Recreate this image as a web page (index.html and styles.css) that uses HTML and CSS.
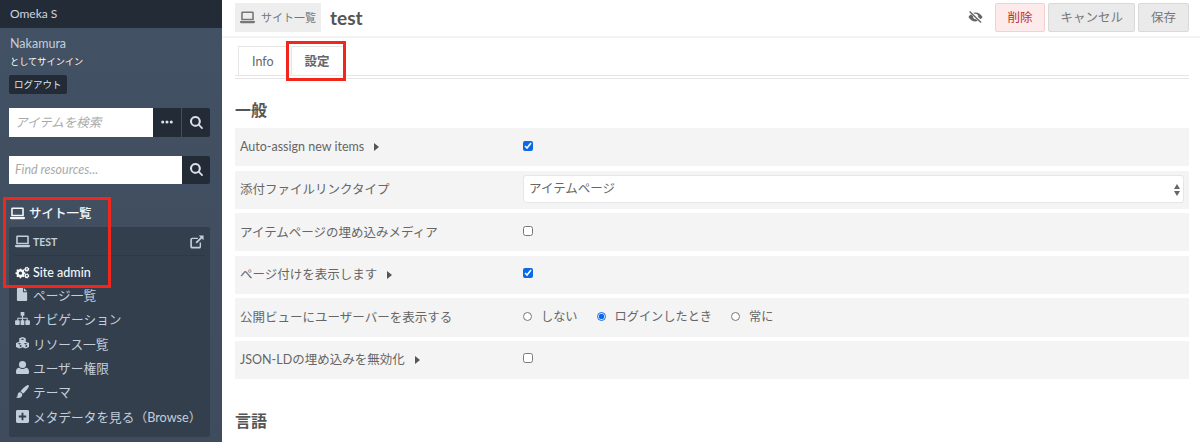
FILE: index.html
```html
<!DOCTYPE html>
<html lang="ja">
<head>
    <meta charset="UTF-8">
    <title>test · 設定 · Omeka S</title>
    <link rel="stylesheet" href="styles.css">
</head>
<body>
    <svg class="icon-defs" width="0" height="0">
        <symbol id="i-laptop" viewBox="0 0 16 14"><path d="M2.500 .5h11a1.300 1.300 0 0 1 1.300 1.300V10H1.200V1.800A1.300 1.300 0 0 1 2.500 .5zm.4 1.700v6.200h10.200V2.200zM0 10.800h16v1a1.400 1.400 0 0 1-1.400 1.400H1.400A1.400 1.400 0 0 1 0 11.800z"/></symbol>
        <symbol id="i-search" viewBox="0 0 14 14"><path d="M5.800 0a5.800 5.800 0 0 1 4.700 9.200l3.100 3.100a.9.9 0 0 1-1.300 1.300l-3.100-3.100A5.800 5.800 0 1 1 5.800 0zm0 2.200a3.600 3.600 0 1 0 0 7.200 3.600 3.600 0 0 0 0-7.200z"/></symbol>
        <symbol id="i-dots" viewBox="0 0 14 4"><circle cx="2" cy="2" r="1.800"/><circle cx="7" cy="2" r="1.800"/><circle cx="12" cy="2" r="1.800"/></symbol>
        <symbol id="i-external" viewBox="0 0 16 16"><path d="M2.500 3H9v1.600H2.800a.6.6 0 0 0-.6.600v7.600c0 .3.300.6.600.6h7.600a.6.6 0 0 0 .6-.6V8.500h1.600v4.800a2.200 2.200 0 0 1-2.200 2.200H2.500A2.200 2.200 0 0 1 .3 13.300V5.200A2.200 2.200 0 0 1 2.500 3z"/><path d="M10 .5h5.500V6l-2-2-5.700 5.700-1.500-1.500L12 2.500z"/></symbol>
        <symbol id="i-cogs" viewBox="0 0 18 14"><path d="M6 2.500l1.300-.4.500 1.200 1.300.5 1.200-.6 1 1.100-.6 1.200.5 1.300 1.300.4v1.600l-1.300.4-.5 1.300.6 1.200-1.100 1.100-1.200-.6-1.300.5-.4 1.300H5.700l-.4-1.300-1.300-.5-1.200.6-1.100-1.100.6-1.200L1.800 9 .5 8.600V7l1.300-.4.500-1.300-.6-1.200 1.100-1.100 1.200.6 1.300-.5zM6.500 5.800a2 2 0 1 0 0 4 2 2 0 0 0 0-4z"/><path d="M14.500 0l.8.300.1.800.6.400.8-.2.500.8-.5.600v.7l.5.600-.5.800-.8-.2-.6.400-.1.800-.8.300-.6-.6h-.6l-.6.300-.7-.5.200-.8-.4-.6-.8-.2V2.500l.8-.2.400-.6-.2-.8.700-.5.600.4h.6zm-.3 1.800a1 1 0 1 0 0 2 1 1 0 0 0 0-2z"/><path d="M14.500 8l.8.300.1.800.6.400.8-.2.500.8-.5.600v.7l.5.600-.5.800-.8-.2-.6.400-.1.800-.8.300-.6-.6h-.6l-.6.300-.7-.5.200-.8-.4-.6-.8-.2v-1.200l.8-.2.400-.6-.2-.8.700-.5.600.4h.6zm-.3 1.800a1 1 0 1 0 0 2 1 1 0 0 0 0-2z"/></symbol>
        <symbol id="i-file" viewBox="0 0 12 14"><path d="M1 0h5.500v4.500H11V13a1 1 0 0 1-1 1H1a1 1 0 0 1-1-1V1a1 1 0 0 1 1-1z"/><path d="M7.500 0L11 3.500H7.500z"/></symbol>
        <symbol id="i-sitemap" viewBox="0 0 16 14"><path d="M6 0h4v4H8.600v2.200h5V9H15a1 1 0 0 1 1 1v3a1 1 0 0 1-1 1h-3a1 1 0 0 1-1-1v-3a1 1 0 0 1 1-1h.5V7.400H8.600V9H10v5H6V9h1.400V7.400H3.500V9H4a1 1 0 0 1 1 1v3a1 1 0 0 1-1 1H1a1 1 0 0 1-1-1v-3a1 1 0 0 1 1-1h1.400V6.200h5V4H6z"/></symbol>
        <symbol id="i-cubes" viewBox="0 0 16 14"><path d="M8 0l3.500 1.400v3.700l3.500 1.400v4.300L11.300 12.500 8 11 4.700 12.500 1 10.800V6.500l3.500-1.400V1.400zM8 1.500L6 2.300l2 .8 2-.8zM4.700 6.400l-1.900.8 1.900.8 1.900-.8zm6.600 0l-1.900.8 1.900.8 1.900-.8zM5 9.200v1.800l1.800-.9V8.400zm6.200 0v1.800l1.800-.9V8.400z"/></symbol>
        <symbol id="i-user" viewBox="0 0 14 14"><circle cx="7" cy="3.800" r="3.800"/><path d="M3.500 7.400C4.500 8.200 5.700 8.700 7 8.700s2.500-.5 3.500-1.300c2 .2 3.500 1.700 3.500 3.900v1.300a1.400 1.400 0 0 1-1.400 1.400H1.400A1.400 1.400 0 0 1 0 12.600v-1.300c0-2.200 1.500-3.700 3.500-3.900z"/></symbol>
        <symbol id="i-brush" viewBox="0 0 14 14"><path d="M13.400.3c.6.500.6 1.200.2 1.900C12 5 9.500 8 7.500 9.500 7 8.200 6 7.300 4.800 6.900 6.400 4.700 9.300 2 12 .4c.5-.3 1-.4 1.400-.1z"/><path d="M4 7.800c1.400 0 2.700 1.100 2.700 2.700C6.700 13 4.500 14 2.500 14 1.400 14 .4 13.600 0 13c1 0 1.500-.5 1.700-1.700C1.900 9.600 2.500 7.800 4 7.800z"/></symbol>
        <symbol id="i-plus" viewBox="0 0 14 14"><path d="M1.500 0h11A1.500 1.500 0 0 1 14 1.500v11a1.500 1.500 0 0 1-1.500 1.500h-11A1.500 1.500 0 0 1 0 12.500v-11A1.500 1.500 0 0 1 1.500 0zM6 3v3H3v2h3v3h2V8h3V6H8V3z"/></symbol>
        <symbol id="i-eye-off" viewBox="0 0 16 14"><path d="M2.200 0l12.300 11.800-1.100 1.200L1.100 1.200z"/><path d="M3.200 3.600l2.200 2.100a2.800 2.800 0 0 0 3.300 3.200l1.700 1.600A8 8 0 0 1 8 11.200C4.800 11.200 2 9.300.4 6.400c.6-1.100 1.600-2 2.800-2.800zM8 1.600c3.200 0 6 1.900 7.600 4.800-.5 1-1.300 1.800-2.200 2.500L10.800 6.500A2.800 2.800 0 0 0 7.300 3.200L5.700 1.900A8 8 0 0 1 8 1.600z"/></symbol>
    </svg>

    <aside class="sidebar">
        <div class="brand">Omeka S</div>
        <div class="user-info">
            <div class="user-name">Nakamura</div>
            <div class="user-signed">としてサインイン</div>
            <a class="logout" href="#">ログアウト</a>
        </div>
        <form class="search-form item-search">
            <input type="text" placeholder="アイテムを検索">
            <button type="button" class="dark-btn dots"><svg class="dots-icon"><use href="#i-dots"/></svg></button>
            <button type="button" class="dark-btn"><svg class="search-icon"><use href="#i-search"/></svg></button>
        </form>
        <form class="search-form resource-search">
            <input type="text" placeholder="Find resources...">
            <button type="button" class="dark-btn"><svg class="search-icon"><use href="#i-search"/></svg></button>
        </form>
        <nav class="site-nav">
            <div class="nav-title"><svg class="nav-icon title-icon"><use href="#i-laptop"/></svg>サイト一覧</div>
            <div class="nav-panel">
                <div class="nav-site">
                    <svg class="nav-icon"><use href="#i-laptop"/></svg>
                    <span class="site-name">TEST</span>
                    <svg class="external-icon"><use href="#i-external"/></svg>
                </div>
                <div class="nav-admin"><svg class="nav-icon"><use href="#i-cogs"/></svg>Site admin</div>
                <ul>
                    <li><svg class="nav-icon"><use href="#i-file"/></svg>ページ一覧</li>
                    <li><svg class="nav-icon"><use href="#i-sitemap"/></svg>ナビゲーション</li>
                    <li><svg class="nav-icon"><use href="#i-cubes"/></svg>リソース一覧</li>
                    <li><svg class="nav-icon"><use href="#i-user"/></svg>ユーザー権限</li>
                    <li><svg class="nav-icon"><use href="#i-brush"/></svg>テーマ</li>
                    <li><svg class="nav-icon"><use href="#i-plus"/></svg>メタデータを見る（Browse）</li>
                </ul>
            </div>
        </nav>
        <div class="highlight highlight-nav"></div>
    </aside>

    <main class="content">
        <header class="page-header">
            <a class="back-link" href="#"><svg class="back-icon"><use href="#i-laptop"/></svg>サイト一覧</a>
            <h1>test</h1>
            <svg class="eye-icon"><use href="#i-eye-off"/></svg>
            <a class="btn btn-delete" href="#">削除</a>
            <a class="btn btn-cancel" href="#">キャンセル</a>
            <a class="btn btn-save" href="#">保存</a>
        </header>

        <div class="tabs">
            <a class="tab" href="#">Info</a>
            <a class="tab tab-active" href="#">設定</a>
            <div class="highlight highlight-tab"></div>
        </div>

        <h2>一般</h2>
        <div class="field">
            <div class="field-label">Auto-assign new items<span class="caret"></span></div>
            <div class="field-value"><input type="checkbox" checked></div>
        </div>
        <div class="field">
            <div class="field-label">添付ファイルリンクタイプ</div>
            <div class="field-value">
                <div class="select">アイテムページ<span class="select-arrows"></span></div>
            </div>
        </div>
        <div class="field">
            <div class="field-label">アイテムページの埋め込みメディア</div>
            <div class="field-value"><input type="checkbox"></div>
        </div>
        <div class="field">
            <div class="field-label">ページ付けを表示します<span class="caret"></span></div>
            <div class="field-value"><input type="checkbox" checked></div>
        </div>
        <div class="field">
            <div class="field-label">公開ビューにユーザーバーを表示する</div>
            <div class="field-value radios">
                <label><input type="radio" name="userbar">しない</label>
                <label><input type="radio" name="userbar" checked>ログインしたとき</label>
                <label><input type="radio" name="userbar">常に</label>
            </div>
        </div>
        <div class="field">
            <div class="field-label">JSON-LDの埋め込みを無効化<span class="caret"></span></div>
            <div class="field-value"><input type="checkbox"></div>
        </div>

        <h2 class="section-language">言語</h2>
    </main>
</body>
</html>
```

FILE: styles.css
```css
* {
    box-sizing: border-box;
}
html, body {
    height: 100%;
}
body {
    margin: 0;
    display: flex;
    height: 442px;
    overflow: hidden;
    background: #fff;
    color: #666;
    font-family: Lato, "Noto Sans CJK JP", sans-serif;
    font-size: 12.500px;
}
a {
    text-decoration: none;
    color: inherit;
}
.icon-defs {
    position: absolute;
}
svg {
    fill: currentColor;
    flex: none;
}

/* sidebar */
.sidebar {
    position: relative;
    width: 222px;
    flex: none;
    background: linear-gradient(to bottom, #425164, #3f4c5d);
    color: #fff;
}
.brand {
    height: 27.500px;
    padding-left: 10px;
    background: #232b36;
    color: #cdd6e0;
    font-size: 12px;
    line-height: 27px;
}
.user-info {
    padding: 7px 0 0 10px;
}
.user-name {
    color: #c3cfdc;
    font-size: 12.500px;
    line-height: 18px;
}
.user-signed {
    margin-top: 1px;
    font-size: 9.200px;
    line-height: 16px;
}
.logout {
    display: inline-block;
    margin: 5px 0 0 -1px;
    padding: 0 5px;
    background: #232b36;
    border-radius: 2px;
    color: #dfe5eb;
    font-size: 9.500px;
    line-height: 19px;
}
.search-form {
    display: flex;
    gap: 1px;
    padding: 0 12px 0 9px;
}
.item-search {
    margin-top: 14px;
    height: 29px;
}
.resource-search {
    margin-top: 19px;
    height: 28px;
}
.search-form input {
    flex: 1;
    min-width: 0;
    padding: 0 6px;
    border: 0;
    margin: 0 -1px 0 0;
    border-radius: 0;
    background: #fff;
    font-family: inherit;
    font-size: 12.500px;
    font-style: italic;
}
.search-form input::placeholder {
    color: #aaa;
    opacity: 1;
}
.dark-btn {
    display: flex;
    align-items: center;
    justify-content: center;
    width: 28px;
    padding: 0;
    border: 0;
    border-radius: 0 2px 2px 0;
    background: #232b36;
    color: #dbe2e9;
}
.dots {
    border-radius: 0;
}
.search-icon {
    width: 13px;
    height: 13px;
}
.dots-icon {
    width: 12px;
    height: 4px;
}
.site-nav {
    margin-top: 21px;
    padding: 0 12px 0 9px;
}
.nav-title {
    display: flex;
    align-items: center;
    font-size: 12.500px;
    font-weight: 500;
    line-height: 18px;
    color: #f5f7f9;
}
.nav-icon {
    width: 15px;
    height: 13px;
    margin-right: 3px;
}
.title-icon {
    margin: 0 4px 0 1px;
}
.nav-panel {
    margin-top: 4px;
    height: 210px;
    padding: 0 5px;
    background: #343f4e;
    border-radius: 2px;
    color: #c3cedb;
}
.nav-site {
    display: flex;
    align-items: center;
    height: 29px;
    padding: 2px 1px 0;
    border-bottom: 1px solid #2e3846;
    font-size: 10.500px;
    font-weight: 700;
}
.site-name {
    flex: 1;
}
.external-icon {
    width: 14px;
    height: 14px;
}
.nav-admin {
    display: flex;
    align-items: center;
    height: 21px;
    margin-top: 6px;
    padding-left: 1px;
    color: #f5f7f9;
    font-size: 12.500px;
    font-weight: 500;
}
.nav-panel ul {
    list-style: none;
    margin: 0;
    padding: 0 0 0 1px;
}
.nav-panel li {
    display: flex;
    align-items: center;
    height: 24.300px;
    font-size: 12.700px;
}
.highlight {
    position: absolute;
    border: 3px solid #f3261c;
    pointer-events: none;
}
.highlight-nav {
    left: 3px;
    top: 197px;
    width: 108px;
    height: 91px;
}

/* main area */
.content {
    flex: 1;
    min-width: 0;
    padding: 0 11.500px 0 13px;
}
.page-header {
    display: flex;
    align-items: center;
    height: 38px;
    margin: 0 -11.500px 0 -13px;
    padding: 0 11.500px 2px 13px;
    border-bottom: 2px solid #f3f3f3;
}
.back-link {
    display: flex;
    align-items: center;
    height: 29px;
    padding: 0 5px;
    background: #eee;
    color: #777;
    font-size: 11px;
}
.back-icon {
    width: 15px;
    height: 13px;
    margin-right: 6px;
}
h1 {
    flex: 1;
    margin: 0 0 0 9px;
    color: #555;
    font-size: 19px;
    font-weight: 700;
}
.eye-icon {
    width: 15px;
    height: 13px;
    margin-right: 12px;
    color: #666;
}
.btn {
    height: 29px;
    margin-left: 3px;
    padding: 0 11.500px;
    background: #eaeaea;
    border: 1px solid #d9d9d9;
    border-radius: 2px;
    color: #777;
    font-size: 12.500px;
    line-height: 27px;
}
.btn-delete {
    margin-left: 0;
    background: #fdebeb;
    border-color: #f6cfcf;
    color: #b8323a;
}
.tabs {
    position: relative;
    display: flex;
    height: 33px;
    margin-top: 8px;
    padding-left: 3px;
    border-bottom: 1px solid #e6e6e6;
}
.tabs::after {
    content: "";
    position: absolute;
    left: 0;
    right: 0;
    top: 29px;
    border-top: 1px solid #e6e6e6;
}
.tab {
    height: 29px;
    padding: 0 13px;
    background: #fff;
    border: 1px solid #e6e6e6;
    border-bottom: 0;
    color: #666;
    font-size: 12.500px;
    line-height: 30px;
}
.tab-active {
    margin-left: 3px;
    font-weight: 700;
}
.highlight-tab {
    z-index: 2;
    left: 51px;
    top: -5px;
    width: 60px;
    height: 40px;
}
h2 {
    margin: 20px 0 7px;
    color: #555;
    font-size: 16px;
    font-weight: 700;
    line-height: 22px;
}
.field {
    display: flex;
    align-items: center;
    height: 38.200px;
    margin-bottom: 4.400px;
    padding: 0 5px 2px;
    background: #f4f4f4;
}
.field-label {
    width: 283px;
    flex: none;
}
.field-value {
    flex: 1;
    display: flex;
    align-items: center;
}
.caret {
    display: inline-block;
    margin-left: 10px;
    border-left: 5px solid #555;
    border-top: 4px solid transparent;
    border-bottom: 4px solid transparent;
}
input[type="checkbox"] {
    width: 10px;
    height: 10px;
    margin: 0 0 1px;
    accent-color: #0b68e8;
}
input[type="radio"] {
    width: 9px;
    height: 9px;
    margin: 0 9px 0 0;
    accent-color: #0b68e8;
}
.radios {
    gap: 19px;
    font-size: 12.200px;
}
.radios label {
    display: flex;
    align-items: center;
}
.select {
    position: relative;
    width: 661px;
    height: 28px;
    padding-left: 5px;
    background: #fff;
    border: 1px solid #e6e6e6;
    border-radius: 3px;
    line-height: 26px;
}
.select-arrows::before,
.select-arrows::after {
    content: "";
    position: absolute;
    right: 3px;
    border-left: 3px solid transparent;
    border-right: 3px solid transparent;
}
.select-arrows::before {
    top: 8px;
    border-bottom: 5px solid #666;
}
.select-arrows::after {
    top: 15px;
    border-top: 5px solid #666;
}
.section-language {
    margin-top: 31px;
}
```
